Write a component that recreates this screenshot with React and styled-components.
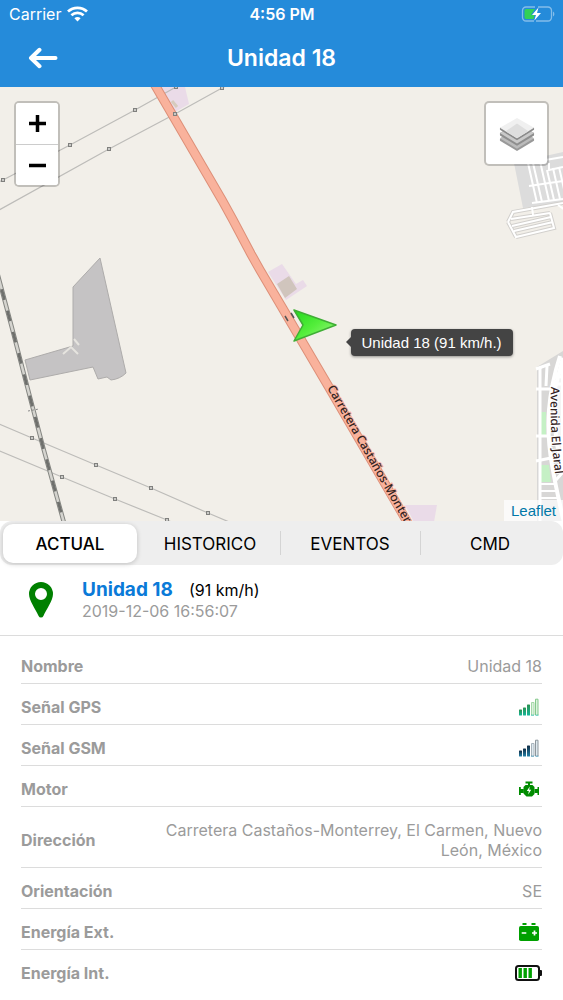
// Unit detail screen: map on top, tabs and current data of the unit below

import React, { useState } from "react";
import styled, { createGlobalStyle, css, ThemeProvider } from "styled-components";

const theme = {
    colors: {
        primary: "#258bda",
        link: "#0a7ad8",
        green: "#008000",
        text: "#000",
        muted: "#9b9b9b",
        border: "#dcdcdc",
        bar: "#eee",
        white: "#fff",
    },
    fontSizes: {
        md: "16px",
        lg: "19px",
        xl: "23px",
    },
};

const TABS = ["ACTUAL", "HISTORICO", "EVENTOS", "CMD"];

const POWER_LINES = [
    [[-10, 186], [3, 180], [70, 145], [135, 110], [176, 87], [196, 76]],
    [[-10, 215], [109, 149], [175, 114], [222, 88], [240, 78]],
    [[-10, 420], [32, 438], [96, 465], [151, 488], [208, 513], [260, 535]],
    [[-10, 447], [62, 477], [115, 499], [167, 520], [190, 530]],
];

const toPoints = (line) => line.map((p) => p.join(",")).join(" ");

const WifiIcon = () => (
    <svg width="21" height="16" viewBox="0 0 21 16" fill="none" stroke="#fff" strokeWidth="2.7">
        <path d="M1 5.6C6.3.6 14.7.6 20 5.6" />
        <path d="M4.4 9.2c3.5-3.2 8.7-3.2 12.2 0" />
        <path d="M7.4 12.2c1.8-1.5 4.4-1.5 6.2 0L10.5 15.4z" fill="#fff" stroke="none" />
    </svg>
);

const ChargingIcon = () => (
    <svg width="34" height="16" viewBox="0 0 34 16">
        <path
            d="M14 1H5a3.5 3.5 0 0 0-3.5 3.5v7A3.5 3.5 0 0 0 5 15h8M17 1h10a3.5 3.5 0 0 1 3.5 3.5v7A3.5 3.5 0 0 1 27 15H15"
            fill="none"
            stroke="#84bdea"
            strokeWidth="1.3"
        />
        <path d="M32 5.5c1.8.8 1.8 4.200 0 5z" fill="#84bdea" />
        <path d="M5 3h9l-4 6h3.5l-1 4H5a1.6 1.6 0 0 1-1.5-1.5v-7A1.6 1.6 0 0 1 5 3z" fill="#32d158" />
        <path d="M17.500 1.5 11 8.900h4L13.300 14.500 20 7h-4z" fill="#fff" />
    </svg>
);

const BackIcon = () => (
    <svg width="30" height="22" viewBox="0 0 30 22" fill="none" stroke="#fff" strokeWidth="4" strokeLinecap="round" strokeLinejoin="round">
        <path d="M11.5 2.8 3 11l8.5 8.2M3.5 11H27.5" />
    </svg>
);

const LayersIcon = () => (
    <svg width="36" height="36" viewBox="0 0 38 38">
        <path d="M1 24v2L19 37l18-11v-2L19 13z" fill="#999" />
        <path d="M1 23.5 19 34.5l18-11-18-11z" fill="#bbb" />
        <path d="M1 18v2.5L19 31.5l18-11V18L19 8z" fill="#8e8e8e" />
        <path d="M1 18 19 29l18-11L19 7z" fill="#c9c9c9" />
        <path d="M1 12.5v2L19 25.5l18-11v-2z" fill="#8a8a8a" />
        <path d="M1 12.5 19 23.5l18-11L19 2z" fill="#f0f0f0" />
        <path d="M7 16.200 19 8l12 8.200-12 7.3z" fill="#dedede" />
    </svg>
);

const PinIcon = () => (
    <svg width="24" height="36" viewBox="0 0 24 36">
        <path
            d="M12 0a12 12 0 0 0-12 12c0 6.5 6.5 15 9.6 22a2.6 2.6 0 0 0 4.8 0C17.5 27 24 18.5 24 12A12 12 0 0 0 12 0zm0 6a6 6 0 1 1 0 12 6 6 0 0 1 0-12z"
            fill="#008000"
        />
    </svg>
);

const SignalIcon = ({ id, colors }) => (
    <svg width="21" height="18" viewBox="0 0 21 18">
        <defs>
            <linearGradient id={id} x1="0" y1="1" x2="0" y2="0">
                <stop offset="0" stopColor={colors[0]} />
                <stop offset="1" stopColor={colors[1]} />
            </linearGradient>
        </defs>
        {[6, 8, 11].map((h, i) => (
            <rect key={h} x={i * 4 + 1} y={17.5 - h} width="3" height={h} rx="0.6" fill={`url(#${id})`} />
        ))}
        <path d="M13.5 17V4.5H16V17zM17.5 17V1.2H20V17z" fill={colors[4]} />
        <path d="M13.5 17V4.5H16V17" fill="none" stroke={colors[2]} />
        <path d="M17.5 17V1.2H20V17" fill="none" stroke={colors[3]} />
        <path d="M13 17.2h8" stroke={colors[0]} strokeDasharray="3 1.5" strokeWidth="0.8" />
    </svg>
);

const EngineIcon = () => (
    <svg width="20" height="16" viewBox="0 0 20 16">
        <g fill="#008c00">
            <path d="M6.5.5h7v2h-2.500v1.500h2.5l2 2v7L13 15.5H7.500L4.500 12.500V6l2-2H9V2.500H6.5z" />
            <path d="M0 6h1.8v2h3v4h-3v2H0zM20 6h-1.5v2h-3v4h3v2H20z" />
        </g>
        <path d="M10.800 5.500 7.800 10h2l-.6 3.500 3-4.700h-2z" fill="#fff" />
    </svg>
);

const CarBatteryIcon = () => (
    <svg width="20" height="18" viewBox="0 0 20 18">
        <path d="M3.5 0h4v2h-4zM12.5 0h4v2h-4z" fill="#00a000" />
        <rect y="3" width="20" height="15" rx="1.8" fill="#00a000" />
        <path d="M2.7 10h4.600M13 10h5M15.5 7.500v5" stroke="#fff" strokeWidth="1.7" />
    </svg>
);

const BatteryIcon = () => (
    <svg width="27" height="16" viewBox="0 0 27 16">
        <rect x="1" y="1" width="23" height="14" rx="2.5" fill="#fff" stroke="#111" strokeWidth="2" />
        <path d="M24.5 5H26q1 0 1 1v4q0 1-1 1h-1.500z" fill="#111" />
        <path d="M3.5 3h3.400v10H3.500zM8.500 3h3.400v10H8.500zM13.500 3h3.400v10h-3.400z" fill="#00a000" />
    </svg>
);

const ROWS = [
    { label: "Nombre", value: "Unidad 18" },
    { label: "Señal GPS", value: <SignalIcon id="gps" colors={["#15b79a", "#2a9150", "#a5d8a8", "#84c98c", "#dcf2de"]} /> },
    { label: "Señal GSM", value: <SignalIcon id="gsm" colors={["#2482a8", "#102b44", "#a9b4bc", "#8d979d", "#dfe9ef"]} /> },
    { label: "Motor", value: <EngineIcon /> },
    { label: "Dirección", value: "Carretera Castaños-Monterrey, El Carmen, Nuevo León, México" },
    { label: "Orientación", value: "SE" },
    { label: "Energía Ext.", value: <CarBatteryIcon /> },
    { label: "Energía Int.", value: <BatteryIcon />, wide: true },
];

// Tiles of the map. The road, the railway and the towns at the east side
const MapTiles = () => (
    <Tiles viewBox="0 87 563 434" preserveAspectRatio="xMidYMid slice" aria-hidden="true">
        <defs>
            <path id="road" d="M148 73 222 200 233 220 251 254 260 270 283 309 330 389 416 537" />
            <path id="roadName" d="M327 388 420 550" />
            <path id="avenue" d="M551 387Q549 430 557 490" />
            <linearGradient id="arrow" x1="0" y1="0" x2="1" y2="1">
                <stop offset="0" stopColor="#22d81c" />
                <stop offset="0.5" stopColor="#55ee3c" />
                <stop offset="1" stopColor="#a6f58c" />
            </linearGradient>
        </defs>

        <g fill="#eadbe8">
            <path d="M160 87h25l4 17-14 8z" />
            <path d="M268 272 282 264 296 284 303 280 307 286 286 300z" />
            <path d="M405 505h32l-3 17h-20z" />
        </g>
        <path d="M277 284 289 276 297 289 285 298z" fill="#d0c5bd" />
        <path d="M172 101l5 6" stroke="#d6cbbd" strokeWidth="3" />

        <g fill="none" stroke="#bdbcb9" strokeWidth="1.2">
            {POWER_LINES.map((line, i) => (
                <polyline key={i} points={toPoints(line)} />
            ))}
        </g>

        <path
            d="M73 287 100 258 126 373Q120 379 111 380L107 377 98 379 93 367 30 380 25 360 73 346z"
            fill="#c5c3c4"
            stroke="#aeacab"
        />
        <path d="M63 354 71 347 78 354M74 339l5 6" fill="none" stroke="#e6e4df" strokeWidth="2" />

        <g fill="none">
            <path d="M-4 268 12 328 26 382 43 447 66 530" stroke="#858682" strokeWidth="4.5" />
            <path d="M-4 268 12 328 26 382 43 447 66 530" stroke="#d5d4cf" strokeWidth="2.5" />
            <path d="M-4 268 12 328 26 382 43 447 66 530" stroke="#6f706d" strokeWidth="2.8" strokeDasharray="11 11" />
            <path d="M28 411l11-2" stroke="#888" strokeDasharray="2 2" />
        </g>

        <use href="#road" fill="none" stroke="#dd8f78" strokeWidth="9.5" />
        <use href="#road" fill="none" stroke="#f9b29c" strokeWidth="7.5" />
        <path d="M285 316l3 5M291 313l3 5" stroke="#555" strokeWidth="1.5" />

        <g fill="#c9c9c6" stroke="#80807e">
            {POWER_LINES.flat().map(([x, y]) => (
                <rect key={`${x}-${y}`} x={x - 1.5} y={y - 1.5} width="3" height="3" />
            ))}
        </g>

        <path d="M514 163 563 152V205L523 208z" fill="#dcdcdc" />
        <path d="M508 222 513 212 563 203M508 222 516 237M511 219 550 213M512 226 551 217M514 231 553 222M516 237 554 228 550 213" fill="none" stroke="#d2d0cd" strokeWidth="4" />
        <g fill="none" stroke="#fff" strokeWidth="2">
            <path d="M528 163 537 203M533 163 542 202M540 161 549 201M547 170 554 200M553 168 560 199M559 167 566 198" />
            <path d="M528 163 563 157M529 186 563 181M532 203 563 199M549 163v7l14-3" />
            <path d="M508 222 513 212 563 203M508 222 516 237 554 228 550 213M511 219 550 213M512 226 551 217M514 231 553 222M532 207l1 8" />
            <path d="M558 205l7 5" />
        </g>

        <path d="M537 367 563 351V525H537z" fill="#d8d7d6" />
        <path d="M541 412h5v25h-5zM541 465h8l2 17h-10z" fill="#c5f0c5" />
        <g fill="none" stroke="#fff">
            <path d="M560 356Q551 384 549 410T552 465T567 535" strokeWidth="4" />
            <path d="M563 358 554 392 556 440 563 470V395z" strokeWidth="4" fill="#f4f4f4" />
            <path d="M540 368V525M547 366 546 386" strokeWidth="3" />
            <path d="M536 369 550 364M536 389h14M536 436h13M536 461 551 458" strokeWidth="3" />
            <path d="M541 484h14M541 491h16M541 498h18" strokeWidth="2" />
            <path d="M554 374l9 4M552 384h11M556 480l7-8" strokeWidth="3" />
        </g>

        <MapLabel fontSize="12">
            <textPath href="#roadName">Carretera Castaños-Monterr</textPath>
        </MapLabel>
        <MapLabel fontSize="12" $halo="#fff">
            <textPath href="#avenue">Avenida El Jaral</textPath>
        </MapLabel>

        <path d="M294 310 336 325 294 341 303 325z" fill="url(#arrow)" stroke="#3fae35" strokeWidth="1.5" strokeLinejoin="round" />
    </Tiles>
);

const App = () => {
    const [active, setActive] = useState(TABS[0]);

    return (
        <ThemeProvider theme={theme}>
            <GlobalStyle />
            <Screen>
                <Header>
                    <StatusBar>
                        <Carrier>
                            Carrier
                            <WifiIcon />
                        </Carrier>
                        <Clock>4:56 PM</Clock>
                        <Charge>
                            <ChargingIcon />
                        </Charge>
                    </StatusBar>
                    <NavBar>
                        <BackBtn aria-label="Volver">
                            <BackIcon />
                        </BackBtn>
                        <Title>Unidad 18</Title>
                    </NavBar>
                </Header>

                <MapBox>
                    <MapTiles />
                    <ZoomControl>
                        <ZoomBtn aria-label="Acercar">
                            <svg width="17" height="17" viewBox="0 0 17 17" stroke="#000" strokeWidth="3.5">
                                <path d="M0 8.5h17M8.5 0v17" />
                            </svg>
                        </ZoomBtn>
                        <ZoomBtn aria-label="Alejar">
                            <svg width="17" height="17" viewBox="0 0 17 17" stroke="#000" strokeWidth="3.5">
                                <path d="M0 8.5h17" />
                            </svg>
                        </ZoomBtn>
                    </ZoomControl>
                    <LayersBtn aria-label="Capas">
                        <LayersIcon />
                    </LayersBtn>
                    <Tooltip>Unidad 18 (91 km/h.)</Tooltip>
                    <Attribution>
                        <a href="#leaflet">Leaflet</a>
                    </Attribution>
                </MapBox>

                <Tabs role="tablist">
                    {TABS.map((tab) => (
                        <Tab key={tab} role="tab" aria-selected={tab === active} $active={tab === active} onClick={() => setActive(tab)}>
                            {tab}
                        </Tab>
                    ))}
                </Tabs>

                <Unit>
                    <PinIcon />
                    <div>
                        <UnitTop>
                            <UnitName>Unidad 18</UnitName>
                            <Speed>(91 km/h)</Speed>
                        </UnitTop>
                        <UnitDate>2019-12-06 16:56:07</UnitDate>
                    </div>
                </Unit>

                <List>
                    {ROWS.map(({ label, value, wide }) => (
                        <Row key={label}>
                            <Label>{label}</Label>
                            <Value $icon={typeof value !== "string"} $wide={wide}>
                                {value}
                            </Value>
                        </Row>
                    ))}
                </List>
            </Screen>
        </ThemeProvider>
    );
};

const GlobalStyle = createGlobalStyle`
    * {
        box-sizing: border-box;
    }

    body {
        margin: 0;
        background: #fff;
        font-family: Inter, "Liberation Sans", sans-serif;
    }

    button {
        padding: 0;
        border: 0;
        font-family: inherit;
        cursor: pointer;
    }

    svg {
        display: block;
        flex-shrink: 0;
    }
`;

const PosCenter = css`
    display: flex;
    align-items: center;
    justify-content: center;
`;

const Screen = styled.div`
    display: flex;
    flex-direction: column;
    min-height: 100vh;
`;

const Header = styled.header`
    background: ${({ theme }) => theme.colors.primary};
    color: ${({ theme }) => theme.colors.white};
`;

const StatusBar = styled.div`
    display: grid;
    grid-template-columns: 1fr auto 1fr;
    align-items: center;
    height: 28px;
    padding: 0 8px 0 9px;
    font-size: ${({ theme }) => theme.fontSizes.md};
`;

const Carrier = styled.span`
    display: flex;
    align-items: center;
    gap: 6px;
`;

const Clock = styled.span`
    font-weight: 600;
`;

const Charge = styled.span`
    justify-self: end;
`;

const NavBar = styled.div`
    display: grid;
    grid-template-columns: 1fr auto 1fr;
    align-items: center;
    height: 59px;
    padding: 0 28px;
`;

const BackBtn = styled.button`
    justify-self: start;
    background: none;
`;

const Title = styled.h1`
    margin: 0;
    font-size: ${({ theme }) => theme.fontSizes.xl};
    font-weight: 600;
`;

const MapBox = styled.section`
    position: relative;
    flex: 1 0 300px;
    overflow: hidden;
    background: #f2efe9;
    font-family: "Liberation Sans", Arial, sans-serif;
`;

const Tiles = styled.svg`
    position: absolute;
    width: 100%;
    height: 100%;
`;

const MapLabel = styled.text`
    fill: #33231f;
    stroke: ${({ $halo }) => $halo || "#f9b29c"};
    stroke-width: 2px;
    paint-order: stroke;
    font-family: "Noto Sans", sans-serif;
    font-weight: 500;
`;

const MapControl = css`
    position: absolute;
    top: 14px;
    border: 2px solid rgba(0, 0, 0, 0.2);
    border-radius: 5px;
    background: #fff;
    background-clip: padding-box;
`;

const ZoomControl = styled.div`
    ${MapControl}
    left: 14px;
    overflow: hidden;
`;

const ZoomBtn = styled.button`
    ${PosCenter}
    width: 42px;
    height: 41px;
    background: #fff;

    & + & {
        border-top: 1px solid #ccc;
    }
`;

const LayersBtn = styled.button`
    ${PosCenter}
    ${MapControl}
    right: 14px;
    width: 65px;
    height: 65px;
    border: 2px solid rgba(0, 0, 0, 0.2);
`;

const Tooltip = styled.div`
    position: absolute;
    top: calc(50% + 25px);
    left: calc(50% + 69px);
    padding: 0 11px;
    border-radius: 4px;
    background: #444;
    box-shadow: 0 1px 3px rgba(0, 0, 0, 0.4);
    color: #fff;
    font-size: 15px;
    line-height: 27px;
    white-space: nowrap;

    &::before {
        content: "";
        position: absolute;
        top: 8px;
        right: 100%;
        border: 5px solid transparent;
        border-left: 0;
        border-right-color: #444;
    }
`;

const Attribution = styled.div`
    position: absolute;
    right: 0;
    bottom: 0;
    padding: 0 7px;
    background: rgba(255, 255, 255, 0.7);
    font-size: 15px;
    line-height: 21px;

    a {
        color: #0078a8;
        text-decoration: none;
    }
`;

const Tabs = styled.div`
    display: grid;
    grid-template-columns: repeat(4, 1fr);
    height: 44px;
    padding: 3px 0 2px 3px;
    border-radius: 12px;
    background: ${({ theme }) => theme.colors.bar};
`;

const Tab = styled.button`
    position: relative;
    margin-right: 6px;
    border-radius: 10px;
    background: none;
    color: ${({ theme }) => theme.colors.text};
    font-size: 17px;

    ${({ $active }) =>
        $active
            ? css`
                  background: #fff;
                  box-shadow: 0 1px 5px rgba(0, 0, 0, 0.2);
                  font-weight: 500;
              `
            : css`
                  &:not(:last-child)::after {
                      content: "";
                      position: absolute;
                      top: 7px;
                      right: -4px;
                      width: 1px;
                      height: 24px;
                      background: #d4d4d4;
                  }
              `}
`;

const Unit = styled.section`
    display: flex;
    align-items: center;
    gap: 29px;
    height: 71px;
    padding: 0 29px;
    border-bottom: 1px solid ${({ theme }) => theme.colors.border};
`;

const UnitTop = styled.div`
    display: flex;
    align-items: baseline;
    gap: 16px;
    line-height: 22px;
`;

const UnitName = styled.h2`
    margin: 0;
    color: ${({ theme }) => theme.colors.link};
    font-size: ${({ theme }) => theme.fontSizes.lg};
    font-weight: 700;
`;

const Speed = styled.span`
    font-size: ${({ theme }) => theme.fontSizes.md};
`;

const UnitDate = styled.div`
    color: ${({ theme }) => theme.colors.muted};
    font-size: ${({ theme }) => theme.fontSizes.md};
    line-height: 20px;
`;

const List = styled.dl`
    margin: 0;
    padding: 7px 21px 9px;
`;

const Row = styled.div`
    display: flex;
    align-items: center;
    justify-content: space-between;
    padding: 13px 0 7px;
    border-bottom: 1px solid ${({ theme }) => theme.colors.border};
    color: ${({ theme }) => theme.colors.muted};
    font-size: ${({ theme }) => theme.fontSizes.md};
    line-height: 20px;

    &:last-child {
        border-bottom-color: transparent;
    }
`;

const Label = styled.dt`
    font-weight: 700;
`;

const Value = styled.dd`
    max-width: 400px;
    margin: 0;
    text-align: right;

    ${({ $icon, $wide }) =>
        $icon &&
        css`
            padding-right: ${$wide ? 0 : 3}px;
        `}
`;

export default App;
